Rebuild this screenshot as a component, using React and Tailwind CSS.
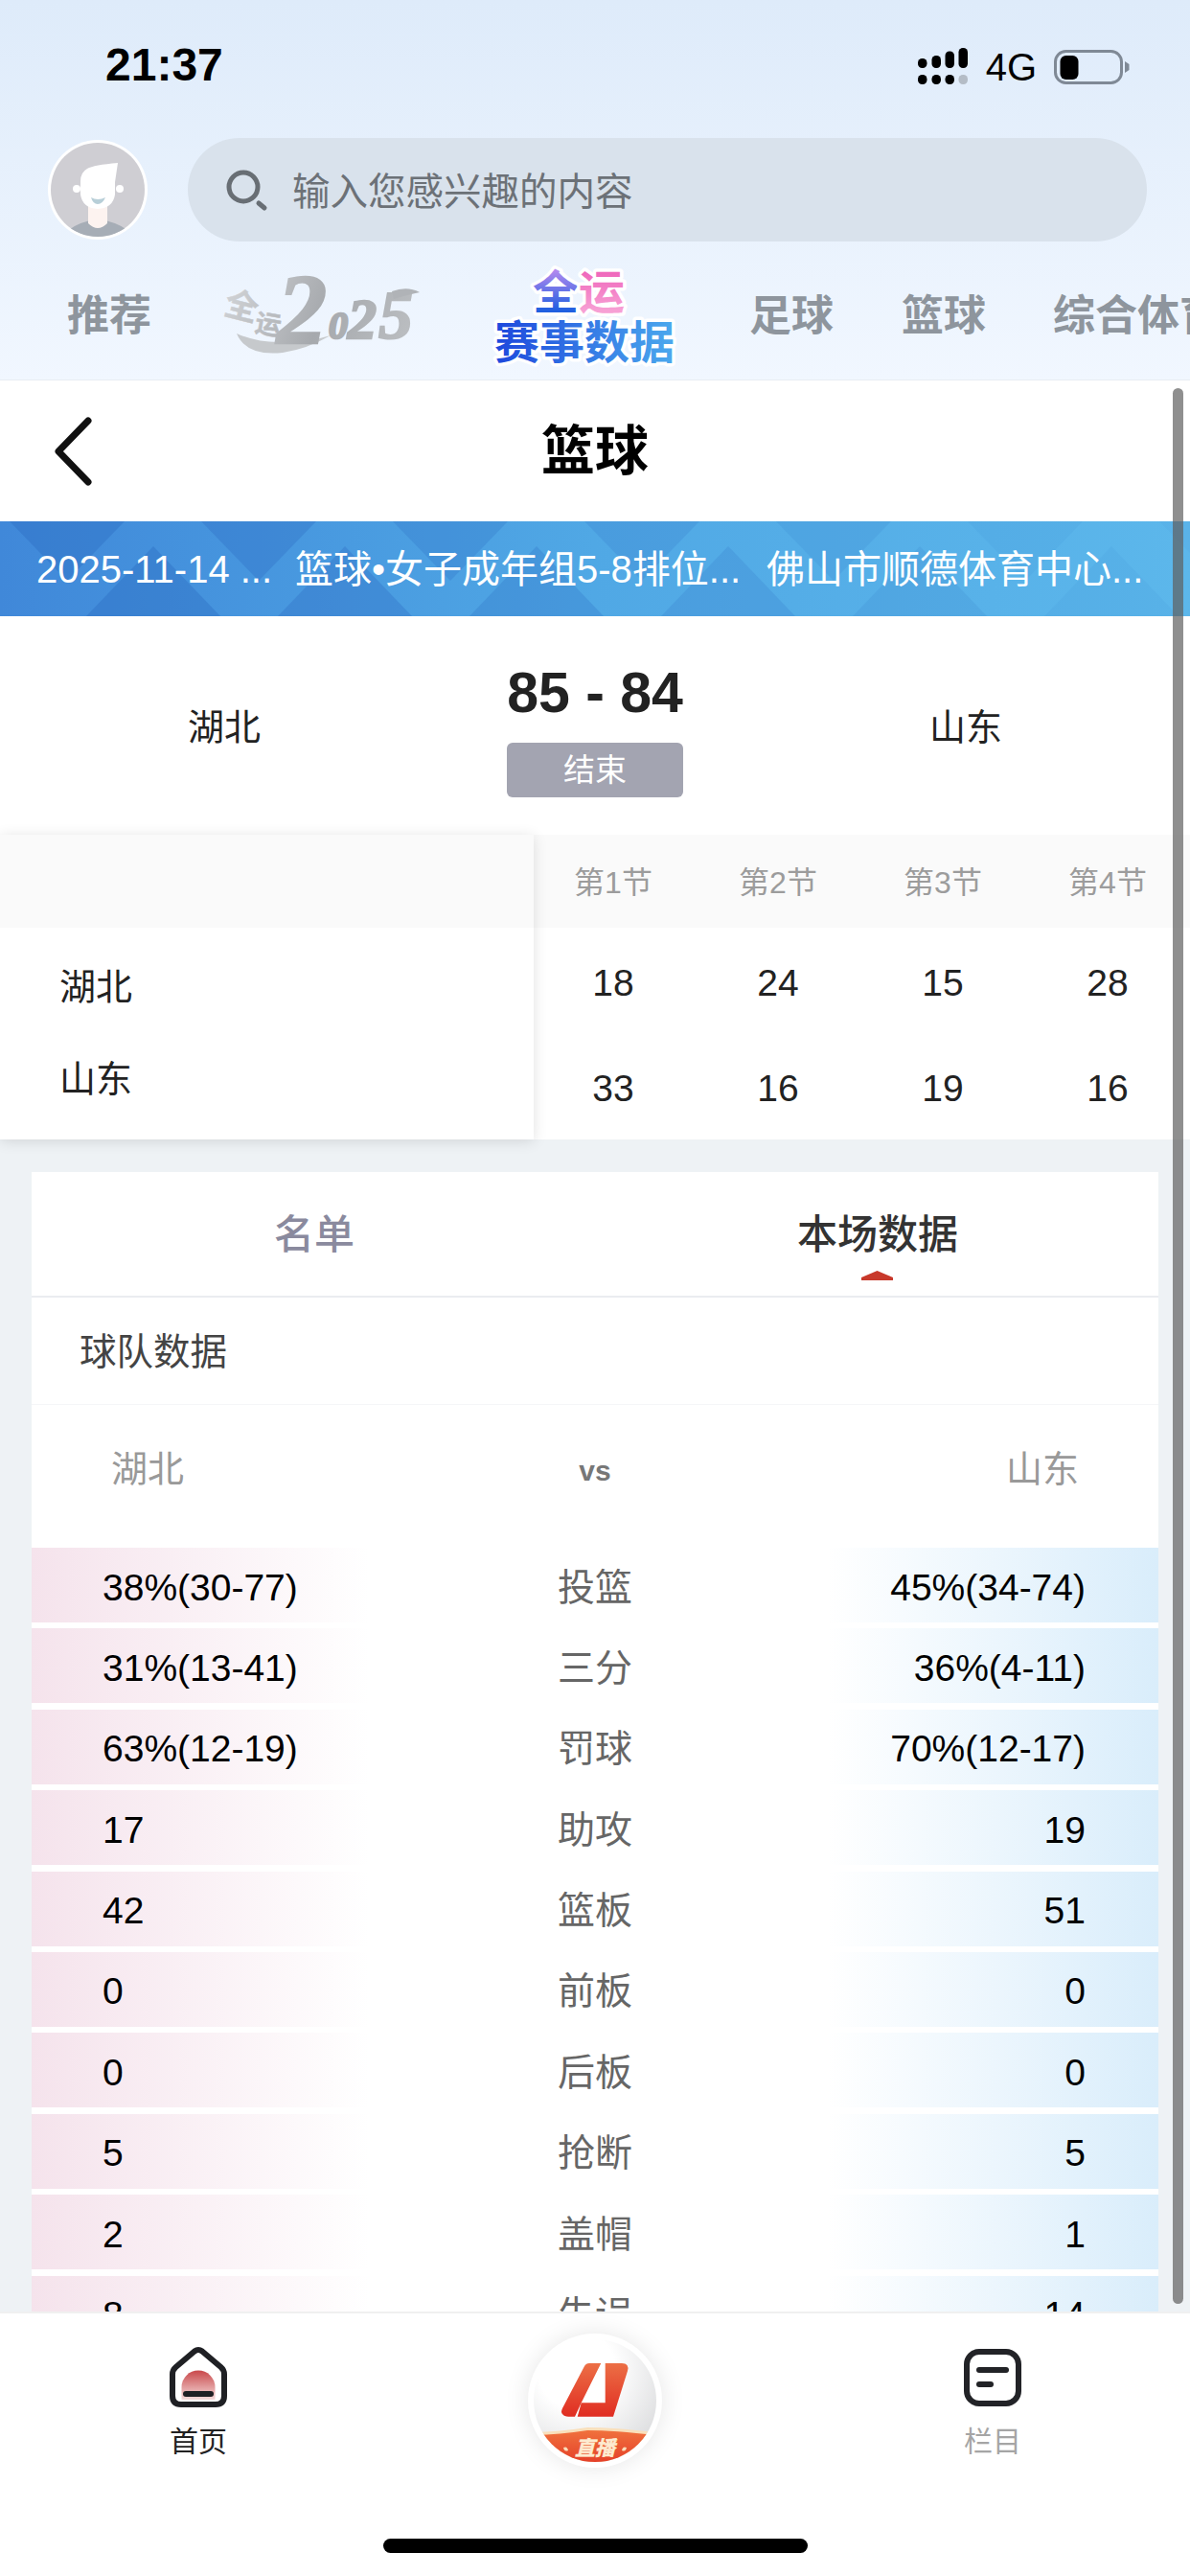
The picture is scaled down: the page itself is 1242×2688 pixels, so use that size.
const quarters = ["第1节", "第2节", "第3节", "第4节"];

const scores = [
  ["18", "24", "15", "28"],
  ["33", "16", "19", "16"],
];

const stats = [
  ["38%(30-77)", "投篮", "45%(34-74)"],
  ["31%(13-41)", "三分", "36%(4-11)"],
  ["63%(12-19)", "罚球", "70%(12-17)"],
  ["17", "助攻", "19"],
  ["42", "篮板", "51"],
  ["0", "前板", "0"],
  ["0", "后板", "0"],
  ["5", "抢断", "5"],
  ["2", "盖帽", "1"],
  ["8", "失误", "14"],
];

function SignalIcon() {
  const cols = [
    { x: 0, top: 11 },
    { x: 14.5, top: 8 },
    { x: 28.5, top: 3.5 },
    { x: 42.5, top: 0 },
  ];
  return (
    <svg width="54" height="40" viewBox="0 0 54 40" className="block">
      {cols.map((c, i) => (
        <g key={c.x}>
          <rect x={c.x} y={c.top} width="9.5" height={21 - c.top} rx="4.5" fill="#000" />
          <rect x={c.x} y="28" width="9.5" height="10" rx="4.5" fill={i === 3 ? "#b4bcc6" : "#000"} />
        </g>
      ))}
    </svg>
  );
}

function BatteryIcon() {
  return (
    <svg width="80" height="36" viewBox="0 0 80 36" className="block">
      <rect x="1.5" y="1.5" width="69" height="33" rx="11" fill="none" stroke="#7f8995" strokeWidth="3" />
      <rect x="6.5" y="6" width="19" height="25" rx="6" fill="#000" />
      <path d="M74 12 L78.5 15 V21 L74 24 Z" fill="#7f8995" />
    </svg>
  );
}

function Avatar() {
  return (
    <svg width="104" height="106" viewBox="0 0 104 106" className="block shrink-0">
      <defs>
        <clipPath id="avatarClip">
          <circle cx="52" cy="53" r="49" />
        </clipPath>
      </defs>
      <circle cx="52" cy="53" r="52" fill="#fff" />
      <circle cx="52" cy="53" r="49" fill="#cfced3" />
      <g clipPath="url(#avatarClip)">
        <path d="M17 100 Q24 90 44 85 H60 Q80 90 88 100 V110 H17 Z" fill="#a6adb6" />
        <path d="M42 70 H62 V88 Q52 98 42 88 Z" fill="#fdf3f0" />
      </g>
      <circle cx="30" cy="52" r="4" fill="#fff" />
      <circle cx="75" cy="52" r="4" fill="#fff" />
      <path d="M41 31 Q48 27 73 25 L70 45 V58 Q68 72 52 73 Q36 72 34 58 V44 Q34 35 41 31 Z" fill="#fff" />
      <path d="M45 61 Q52 65 60 61 Q57 68 52 68 Q47 68 45 61 Z" fill="#b8cfd8" />
    </svg>
  );
}

function SearchIcon() {
  return (
    <svg width="50" height="50" viewBox="0 0 50 50" className="block shrink-0">
      <circle cx="22" cy="22" r="15" fill="none" stroke="#686e74" strokeWidth="5" />
      <path d="M38 39 L44 44" stroke="#686e74" strokeWidth="5" strokeLinecap="round" />
    </svg>
  );
}

function QuanyunLogo() {
  const serif = "'Liberation Serif', serif";
  return (
    <svg width="206" height="84" viewBox="0 0 206 84" className="block shrink-0 overflow-visible">
      <defs>
        <linearGradient id="greyInk" gradientUnits="userSpaceOnUse" x1="0" y1="0" x2="206" y2="84">
          <stop offset="0" stopColor="#d4d6d9" />
          <stop offset="0.5" stopColor="#a6a9ad" />
          <stop offset="1" stopColor="#bfc2c5" />
        </linearGradient>
      </defs>
      <path d="M14 60 Q24 84 62 80 Q88 76 112 62 Q86 70 62 69 Q36 70 14 60 Z" fill="#c6c9cc" />
      <g stroke="url(#greyInk)" fill="url(#greyInk)">
        <text x="2" y="44" fontSize="35" fontWeight="700" strokeWidth="0.5" transform="rotate(14 20 30)">全</text>
        <text x="34" y="60" fontSize="27" fontWeight="700" strokeWidth="0.5" transform="rotate(10 46 48)">运</text>
        <text x="56" y="70" fontSize="104" fontWeight="700" fontStyle="italic" strokeWidth="2.5" fontFamily={serif}>2</text>
        <text x="110" y="65" fontSize="40" fontWeight="700" fontStyle="italic" strokeWidth="2.5" fontFamily={serif}>0</text>
        <text x="130" y="65" fontSize="60" fontWeight="700" fontStyle="italic" strokeWidth="2.5" fontFamily={serif}>2</text>
        <text x="162" y="65" fontSize="72" fontWeight="700" fontStyle="italic" strokeWidth="2" fontFamily={serif}>5</text>
      </g>
      <path d="M176 16 Q192 10 205 17 Q190 20 178 24 Z" fill="#b0b3b7" />
    </svg>
  );
}

function SaishiLogo() {
  return (
    <svg width="196" height="104" viewBox="0 0 196 104" className="block shrink-0 overflow-visible">
      <defs>
        <linearGradient id="quanBlue" gradientUnits="userSpaceOnUse" x1="0" y1="0" x2="0" y2="46">
          <stop offset="0" stopColor="#c08df0" />
          <stop offset="1" stopColor="#1f5fe0" />
        </linearGradient>
        <linearGradient id="yunPink" gradientUnits="userSpaceOnUse" x1="0" y1="0" x2="0" y2="46">
          <stop offset="0" stopColor="#ee5fb8" />
          <stop offset="1" stopColor="#f7a0d4" />
        </linearGradient>
        <linearGradient id="saiBlue" gradientUnits="userSpaceOnUse" x1="0" y1="0" x2="196" y2="0">
          <stop offset="0" stopColor="#1c45dc" />
          <stop offset="1" stopColor="#4cabee" />
        </linearGradient>
      </defs>
      <g style={{ paintOrder: "stroke" }} stroke="#ffffff" strokeWidth="7" strokeLinejoin="round" fontWeight="700">
        <text x="44" y="44" fontSize="48" fill="url(#quanBlue)">全</text>
        <text x="92" y="44" fontSize="48" fill="url(#yunPink)">运</text>
        <text x="4" y="96" fontSize="47" fill="url(#saiBlue)">赛事数据</text>
      </g>
    </svg>
  );
}

function BannerPattern() {
  const tips = [0, 1, 2, 3, 4, 5, 6];
  return (
    <svg width="1242" height="99" viewBox="0 0 1242 99" className="absolute inset-0">
      {tips.map((i) => (
        <g key={i} fill="#2a68c0" fillOpacity={Math.max(0.04, 0.36 - i * 0.06)}>
          <path d={`M${i * 200 + 10} 0 H${i * 200 + 130} L${i * 200 + 70} 62 Z`} />
          <path d={`M${i * 200 + 90} 99 H${i * 200 + 230} L${i * 200 + 160} 26 Z`} />
        </g>
      ))}
    </svg>
  );
}

function HomeIcon() {
  return (
    <svg width="60" height="64" viewBox="0 0 60 64" className="block">
      <defs>
        <linearGradient id="homeFill" x1="0" y1="0" x2="0" y2="1">
          <stop offset="0" stopColor="#c9484a" />
          <stop offset="1" stopColor="#f5dcdc" />
        </linearGradient>
      </defs>
      <path d="M12.5 56 V43 A17.5 17.5 0 0 1 47.5 43 V56 Z" fill="url(#homeFill)" />
      <path
        d="M26 5.5 L6.5 22 Q3 25 3 29.5 V52 Q3 61 12 61 H48 Q57 61 57 52 V29.5 Q57 25 53.5 22 L34 5.5 Q30 2.5 26 5.5 Z"
        fill="none"
        stroke="#1f2024"
        strokeWidth="6"
        strokeLinejoin="round"
      />
      <rect x="14" y="47" width="32" height="6" rx="3" fill="#1f2024" />
    </svg>
  );
}

function ColumnsIcon() {
  return (
    <svg width="60" height="60" viewBox="0 0 60 60" className="block">
      <rect x="3" y="3" width="54" height="54" rx="13" fill="none" stroke="#222327" strokeWidth="6" />
      <rect x="13" y="19" width="34" height="6" rx="3" fill="#222327" />
      <rect x="13" y="34" width="18" height="6" rx="3" fill="#222327" />
    </svg>
  );
}

function LiveButton() {
  return (
    <svg width="140" height="140" viewBox="0 0 140 140" className="block">
      <defs>
        <radialGradient id="liveFace" cx="0.35" cy="0.25" r="0.9">
          <stop offset="0.35" stopColor="#ffffff" />
          <stop offset="1" stopColor="#d5d6d8" />
        </radialGradient>
        <linearGradient id="liveRed" x1="0" y1="0" x2="0" y2="1">
          <stop offset="0" stopColor="#ec6f45" />
          <stop offset="1" stopColor="#e02d22" />
        </linearGradient>
        <linearGradient id="liveWave" x1="0" y1="0" x2="0" y2="1">
          <stop offset="0" stopColor="#f0713d" />
          <stop offset="1" stopColor="#e33826" />
        </linearGradient>
        <clipPath id="liveClip">
          <circle cx="70" cy="70" r="64" />
        </clipPath>
      </defs>
      <circle cx="70" cy="70" r="69" fill="#fff" />
      <circle cx="70" cy="70" r="64" fill="url(#liveFace)" />
      <path
        d="M76.3 31 H64 Q60.7 31 59 34 L36 78 Q34 82 36 84 Q38 86.7 42.3 86.7 H49 L55.7 72.3 Z"
        fill="url(#liveRed)"
      />
      <path
        d="M80.7 31 V72.3 H55.7 L51.7 86.7 H89 L104 39 Q106 31 98 31 Z"
        fill="url(#liveRed)"
      />
      <g clipPath="url(#liveClip)">
        <path d="M0 103 Q30 103 62 98 Q92 98 140 104 V140 H0 Z" fill="#f9dfba" />
        <path d="M0 106 Q30 106 62 101 Q92 101 140 107 V140 H0 Z" fill="url(#liveWave)" />
      </g>
      <text x="70" y="127" textAnchor="middle" fontSize="21" fontWeight="700" fontStyle="italic" fill="#fdebd0" stroke="#fdebd0" strokeWidth="0.5">直播</text>
      <path d="M37 119 Q41 117 42 122 Q38 124 37 119 Z M103 119 Q99 117 98 122 Q102 124 103 119 Z" fill="#f9dfba" />
    </svg>
  );
}

function StatRow({ left, label, right }) {
  return (
    <div className="relative flex h-[78px] items-center justify-between mb-[6.4px] pt-[4px] text-[39px] leading-none text-black">
      <div className="absolute inset-y-0 left-0 w-[352px] bg-gradient-to-r from-[#f5e3ec] to-white" />
      <div className="absolute inset-y-0 right-0 w-[345px] bg-gradient-to-l from-[#d9edfb] to-white" />
      <span className="relative w-[400px] pl-[74px]">{left}</span>
      <span className="relative text-[#666]">{label}</span>
      <span className="relative w-[400px] pr-[76px] text-right">{right}</span>
    </div>
  );
}

export default function App() {
  return (
    <div className="relative flex h-[2688px] w-[1242px] flex-col overflow-hidden bg-[#eef2f5] font-['Liberation_Sans','Noto_Sans_CJK_SC',sans-serif]">
      <header className="h-[397px] shrink-0 border-b border-[#e8edf3] bg-gradient-to-b from-[#deebfa] to-[#f1f7ff]">
        <div className="flex h-[144px] items-start justify-between pl-[110px] pr-[62px] pt-[41px]">
          <span className="text-[48px] font-bold leading-[54px] text-black">21:37</span>
          <div className="flex items-center pt-[9px]">
            <SignalIcon />
            <span className="ml-[17px] text-[40px] leading-[40px] text-black">4G</span>
            <span className="ml-[18px]"><BatteryIcon /></span>
          </div>
        </div>
        <div className="flex h-[108px] items-center pl-[50px]">
          <Avatar />
          <div className="ml-[42px] flex h-[108px] w-[1001px] items-center rounded-full bg-[#d9e2ec] pl-[36px]">
            <SearchIcon />
            <span className="ml-[23px] pt-[5px] text-[39.5px] leading-none text-[#6c7177]">输入您感兴趣的内容</span>
          </div>
        </div>
        <nav className="flex h-[144px] items-center whitespace-nowrap pl-[70px] pt-[12px] text-[44px] font-semibold leading-none text-[#8e959d]">
          <span className="w-[88px] shrink-0">推荐</span>
          <span className="ml-[75px]"><QuanyunLogo /></span>
          <span className="ml-[73px]"><SaishiLogo /></span>
          <span className="ml-[74px] w-[88px] shrink-0">足球</span>
          <span className="ml-[71px] w-[88px] shrink-0">篮球</span>
          <span className="ml-[70px] shrink-0">综合体育</span>
        </nav>
      </header>

      <div className="relative flex h-[147px] shrink-0 items-center justify-center bg-white">
        <svg width="44" height="72" viewBox="0 0 44 72" className="absolute left-[55px] top-[38px]">
          <path d="M37 4 L6 36 L37 68" fill="none" stroke="#111" strokeWidth="7" strokeLinecap="round" strokeLinejoin="round" />
        </svg>
        <h1 className="text-[56px] font-bold leading-none text-black">篮球</h1>
      </div>

      <div className="relative flex h-[99px] shrink-0 items-center whitespace-nowrap bg-gradient-to-r from-[#4088d9] via-[#50a8e5] via-50% to-[#5cb7eb] pl-[38px] text-[40px] leading-none text-white">
        <BannerPattern />
        <span className="relative w-[270px]">2025-11-14 ...</span>
        <span className="relative w-[492px]">篮球•女子成年组5-8排位...</span>
        <span className="relative">佛山市顺德体育中心...</span>
      </div>

      <div className="flex h-[228px] shrink-0 items-start bg-white">
        <div className="w-[468px] pt-[94px] text-center text-[38px] leading-[44px] text-[#222]">湖北</div>
        <div className="flex w-[306px] flex-col items-center pt-[45px]">
          <div className="text-[59px] font-bold leading-[70px] text-[#222]">85 - 84</div>
          <div className="mt-[17px] flex h-[57px] w-[184px] items-center justify-center rounded-[6px] bg-[#a3a4b1] text-[33px] text-white">结束</div>
        </div>
        <div className="w-[468px] pt-[94px] text-center text-[38px] leading-[44px] text-[#222]">山东</div>
      </div>

      <div className="flex h-[318px] shrink-0">
        <div className="relative z-10 w-[557px] shrink-0 shadow-[0_2px_14px_rgba(0,0,0,0.12)]">
          <div className="h-[97px] bg-[#fafafa]" />
          <div className="flex h-[221px] flex-col bg-white pl-[62px] pt-[14px] text-[38px] leading-[96px] text-[#222]">
            <div>湖北</div>
            <div>山东</div>
          </div>
        </div>
        <div className="-ml-[3px] flex-1">
          <div className="grid h-[97px] grid-cols-4 items-center bg-[#fafafa] pt-[3px] text-center text-[32px] text-[#9c9c9c]">
            {quarters.map((q) => (
              <span key={q}>{q}</span>
            ))}
          </div>
          <div className="h-[221px] bg-white">
            {scores.map((row, i) => (
              <div key={i} className="grid h-[110px] grid-cols-4 items-center pt-[6px] text-center text-[39px] text-[#222]">
                {row.map((v, j) => (
                  <span key={j}>{v}</span>
                ))}
              </div>
            ))}
          </div>
        </div>
      </div>

      <main className="min-h-0 flex-1 overflow-hidden pl-[33px] pt-[34px]">
        <section className="w-[1176px] bg-white">
          <div className="flex h-[131px] items-center border-b-2 border-[#eaecf0] pt-[3px] text-[42px] leading-none">
            <div className="w-[588px] pl-[253px] font-medium text-[#8a8a9e]">名单</div>
            <div className="relative w-[588px] pl-[211px] font-medium text-[#333]">
              本场数据
              <span className="absolute left-[278px] top-[58px] h-[10px] w-[33px] bg-[#c8392b] [clip-path:polygon(50%_0,100%_70%,100%_100%,0_100%,0_70%)]" />
            </div>
          </div>
          <div className="flex h-[112px] items-center border-b border-[#f5f6f8] pl-[50px] pt-[3px] text-[38.5px] leading-none text-[#444]">球队数据</div>
          <div className="relative flex h-[149px] items-start justify-between px-[83px] pt-[45px] text-[38px] leading-[44px] text-[#999]">
            <span>湖北</span>
            <span className="pt-[2px] text-[30px] font-bold text-[#777]">vs</span>
            <span>山东</span>
          </div>
          {stats.map((s) => (
            <StatRow key={s[1]} left={s[0]} label={s[1]} right={s[2]} />
          ))}
        </section>
      </main>

      <footer className="relative h-[276px] shrink-0 border-t-2 border-[#f0f0f0] bg-white">
        <div className="flex justify-between pl-[177px] pr-[176px] pt-[34px]">
          <div className="flex w-[60px] flex-col items-center">
            <HomeIcon />
            <span className="mt-[21px] whitespace-nowrap text-[30px] leading-none text-[#222]">首页</span>
          </div>
          <div className="flex w-[60px] flex-col items-center pt-[3px]">
            <ColumnsIcon />
            <span className="mt-[22px] whitespace-nowrap text-[30px] leading-none text-[#a5a5a5]">栏目</span>
          </div>
        </div>
        <div className="absolute left-[551px] top-[21px] rounded-full shadow-[0_0_26px_rgba(0,0,0,0.1)]">
          <LiveButton />
        </div>
        <div className="absolute bottom-[24px] left-[400px] h-[15px] w-[443px] rounded-full bg-black" />
      </footer>

      <div className="absolute left-[1224px] top-[405px] h-[1999px] w-[11px] rounded-full bg-[#5f5f5f]/70" />
    </div>
  );
}
